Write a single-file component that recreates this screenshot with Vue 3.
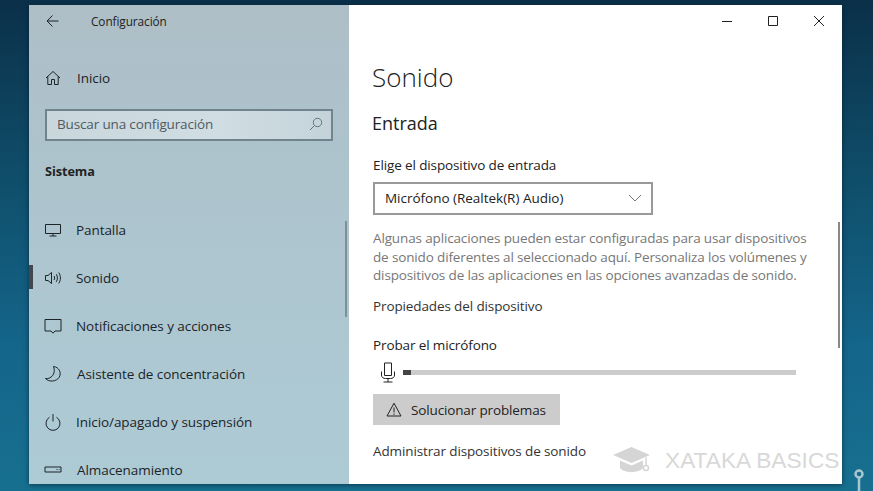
<script setup>
const navItems = [
  { label: 'Pantalla', icon: 'screen' },
  { label: 'Sonido', icon: 'sound', active: true },
  { label: 'Notificaciones y acciones', icon: 'note' },
  { label: 'Asistente de concentración', icon: 'moon', wide: true },
  { label: 'Inicio/apagado y suspensión', icon: 'power' },
  { label: 'Almacenamiento', icon: 'disk', wide: true }
]
</script>

<template>
  <div class="desktop">
    <div class="window">
      <aside class="sidebar">
        <div class="app-title">
          <svg class="back" width="16" height="14" viewBox="0 0 16 14">
            <path d="M13.5 7H2M7.5 1.5 2 7l5.5 5.500" />
          </svg>
          <span>Configuración</span>
        </div>

        <div class="home">
          <svg width="16" height="16" viewBox="0 0 16 16">
            <path d="M1 8 8 1.500 15 8M2.800 6.500V14.500H6.500V9.500H9.500V14.500H13.200V6.500" />
          </svg>
          <span>Inicio</span>
        </div>

        <div class="search">
          <span>Buscar una configuración</span>
          <svg width="14" height="14" viewBox="0 0 14 14">
            <circle cx="8.500" cy="5.500" r="4.200" />
            <path d="M5.500 8.500 1 13" />
          </svg>
        </div>

        <div class="group-name">Sistema</div>

        <nav class="nav">
          <div v-for="item in navItems" :key="item.label" class="nav-item" :class="{ wide: item.wide }">
            <i v-if="item.active" class="active-bar"></i>
            <svg class="nav-icon" width="18" height="18" viewBox="0 0 18 18">
              <template v-if="item.icon === 'screen'">
                <path d="M1.500 3.500H16.500V12.500H1.500ZM9 12.500V15M5.500 15H12.500" />
              </template>
              <template v-if="item.icon === 'sound'">
                <path d="M1.500 6.500H4L7.500 3.500V14.500L4 11.500H1.500Z" />
                <path d="M10 7C10.800 8.200 10.800 9.800 10 11M12.300 5.200C13.800 7.500 13.800 10.500 12.300 12.800M14.700 3.500C17 6.800 17 11.200 14.700 14.500" />
              </template>
              <template v-if="item.icon === 'note'">
                <path d="M1 2.500H17V14H11L9 16.200 7 14H1Z" />
              </template>
              <template v-if="item.icon === 'moon'">
                <path d="M9.500 1.500C15 2 18 8 15 12.500 12.500 16.500 5 17.500 1.500 13.500 6.500 14.500 12.500 9 9.500 1.500Z" />
              </template>
              <template v-if="item.icon === 'power'">
                <path d="M5.500 4.300A7 7 0 1 0 12.500 4.300M9 1V8.500" />
              </template>
              <template v-if="item.icon === 'disk'">
                <path d="M1 6H17V11H1Z" />
                <path d="M12.500 8.500H13.500M14.800 8.500H15.500" />
              </template>
            </svg>
            <span>{{ item.label }}</span>
          </div>
        </nav>
        <i class="side-scroll"></i>
      </aside>

      <main class="content">
        <div class="controls">
          <svg width="12" height="12" viewBox="0 0 12 12"><path d="M1 6.500H11" /></svg>
          <svg width="12" height="12" viewBox="0 0 12 12"><path d="M1.500 1.500H10.500V10.500H1.500Z" /></svg>
          <svg width="12" height="12" viewBox="0 0 12 12"><path d="M1 1 11 11M11 1 1 11" /></svg>
        </div>

        <h1>Sonido</h1>
        <h2>Entrada</h2>
        <p class="label">Elige el dispositivo de entrada</p>
        <div class="select">
          <span>Micrófono (Realtek(R) Audio)</span>
          <svg width="14" height="8" viewBox="0 0 14 8"><path d="M1 1 7 7 13 1" /></svg>
        </div>
        <p class="desc">Algunas aplicaciones pueden estar configuradas para usar dispositivos de sonido diferentes al seleccionado aquí. Personaliza los volúmenes y dispositivos de las aplicaciones en las opciones avanzadas de sonido.</p>
        <p class="link props">Propiedades del dispositivo</p>
        <p class="label test">Probar el micrófono</p>
        <div class="meter">
          <svg width="16" height="21" viewBox="0 0 16 21">
            <path d="M4.500 1H11.500V13.500H4.500ZM1.500 9.500V13C1.500 15.500 3.500 16.500 5.500 16.500H10.500C12.500 16.500 14.500 15.500 14.500 13V9.500M8 16.500V20M3.500 20H12.500" />
          </svg>
          <div class="bar"><div class="level" style="width: 2%"></div></div>
        </div>
        <button class="fix">
          <svg width="16" height="15" viewBox="0 0 16 15">
            <path d="M8 1.200 15 14H1ZM8 5.500V10.500M8 11.500V12.800" />
          </svg>
          <span>Solucionar problemas</span>
        </button>
        <p class="link manage">Administrar dispositivos de sonido</p>
        <i class="main-scroll"></i>
      </main>
    </div>

    <div class="watermark">
      <svg width="38" height="26" viewBox="0 0 38 26">
        <path class="fill" d="M18.500 0 37 8 18.500 16 0 8Z" />
        <path class="fill" d="M7 13.500 18.500 18.500 30 13.500V21C26 26.500 11 26.500 7 21Z" />
        <path class="line" d="M33 10.500V18" />
        <circle class="line" cx="33" cy="21" r="2.500" />
      </svg>
      <span>XATAKA BASICS</span>
    </div>

    <svg class="pin" width="14" height="23" viewBox="0 0 14 23">
      <circle cx="7" cy="6" r="3.500" />
      <path d="M7 10V23" />
    </svg>
  </div>
</template>

<style scoped>
.desktop {
  position: relative;
  width: 873px;
  height: 491px;
  overflow: hidden;
  padding: 5px 31px 7px 29px;
  box-sizing: border-box;
  background: linear-gradient(180deg, #0b3049 0%, #0f4d69 35%, #14658a 70%, #17708f 100%);
  font-family: "Open Sans", "Noto Sans", sans-serif;
  color: #222;
}
.window {
  display: flex;
  height: 479px;
  box-shadow: 0 1px 5px rgba(0, 20, 40, 0.6);
  overflow: hidden;
}
svg {
  fill: none;
  stroke: currentColor;
  stroke-width: 1;
  flex: none;
}

.sidebar {
  position: relative;
  width: 320px;
  flex: none;
  background: linear-gradient(180deg, #aebec7 0%, #adc3cc 30%, #adcbd5 100%);
  font-size: 13.500px;
  letter-spacing: -0.07px;
}
.app-title {
  display: flex;
  align-items: center;
  box-sizing: border-box;
  height: 33px;
  padding: 0 0 1px 16px;
  font-size: 11.800px;
}
.back {
  margin-right: 30px;
  color: #1c2428;
}
.home {
  display: flex;
  align-items: center;
  gap: 16px;
  height: 30px;
  margin-top: 25px;
  padding-left: 16px;
  color: #1c2428;
}
.search {
  display: flex;
  align-items: center;
  justify-content: space-between;
  box-sizing: border-box;
  width: 288px;
  height: 32px;
  margin: 16px 0 0 16px;
  padding: 0 8px 2px 10px;
  border: 2px solid #6f848d;
  background: linear-gradient(90deg, #c9d6dc, #d0dde3 60%, #c4d3da);
  color: #4f5c62;
  letter-spacing: -0.15px;
}
.search svg {
  color: #66757c;
}
.group-name {
  margin: 20px 0 0 16px;
  height: 20px;
  line-height: 20px;
  font-size: 12.700px;
  font-weight: 700;
}
.nav {
  margin-top: 25px;
}
.nav-item {
  position: relative;
  display: flex;
  align-items: center;
  gap: 14px;
  height: 48px;
  padding-left: 15px;
  color: #1c2428;
}
.nav-item.wide {
  gap: 15px;
}
.active-bar {
  position: absolute;
  left: 0;
  top: 11px;
  width: 4px;
  height: 24px;
  background: #42484b;
}
.side-scroll {
  position: absolute;
  left: 316px;
  top: 216px;
  width: 2px;
  height: 96px;
  background: #7f8f97;
}

.content {
  position: relative;
  flex: 1;
  padding-left: 24px;
  background: #fff;
  font-size: 13.500px;
  letter-spacing: -0.12px;
}
.controls {
  display: flex;
  justify-content: flex-end;
  gap: 34px;
  height: 32px;
  padding: 10px 17px 0 0;
  box-sizing: border-box;
  color: #222;
}
h1 {
  margin: 21px 0 0 -1px;
  height: 38px;
  line-height: 38px;
  font-size: 26px;
  font-weight: 300;
  letter-spacing: 0;
  color: #222;
}
h2 {
  margin: 13.500px 0 0 -1px;
  height: 26px;
  line-height: 26px;
  font-size: 18px;
  font-weight: 400;
  letter-spacing: 0;
  color: #222;
}
p {
  margin: 0;
}
.label {
  margin-top: 19.500px;
  line-height: 20px;
}
.select {
  display: flex;
  align-items: center;
  justify-content: space-between;
  box-sizing: border-box;
  width: 280px;
  height: 33px;
  margin-top: 7px;
  padding: 0 9px 1px 10px;
  border: 2px solid #999;
  letter-spacing: -0.02px;
}
.select svg {
  color: #777;
}
.desc {
  width: 450px;
  margin-top: 14px;
  line-height: 18.500px;
  color: #777;
  letter-spacing: -0.14px;
}
.link {
  line-height: 20px;
  color: #333;
}
.props {
  margin-top: 11px;
}
.label.test {
  margin-top: 19px;
}
.meter {
  display: flex;
  align-items: center;
  gap: 7px;
  height: 21px;
  margin-top: 7px;
  padding-left: 7px;
}
.bar {
  width: 393px;
  height: 5px;
  background: #ccc;
}
.level {
  height: 100%;
  background: #444;
}
.fix {
  display: flex;
  align-items: center;
  gap: 9px;
  width: 187px;
  height: 31px;
  margin-top: 11px;
  padding: 0 0 0 13px;
  border: 0;
  background: #ccc;
  color: #222;
  font: inherit;
  letter-spacing: -0.14px;
}
.fix span {
  padding-top: 1px;
}
.manage {
  margin-top: 16px;
}
.main-scroll {
  position: absolute;
  right: 2px;
  top: 217px;
  width: 2px;
  height: 126px;
  background: #888;
}

.watermark {
  position: absolute;
  left: 613px;
  top: 447px;
  display: flex;
  align-items: center;
  gap: 14px;
  height: 26px;
  color: #d8d8d8;
  font-family: "Liberation Sans", sans-serif;
  font-size: 22.700px;
  white-space: nowrap;
}
.watermark .fill {
  fill: #d5d5d5;
  stroke: none;
}
.watermark .line {
  stroke: #d5d5d5;
  stroke-width: 1.500;
}
.pin {
  position: absolute;
  left: 852px;
  top: 468px;
  color: #a9c6d0;
}
.pin * {
  stroke-width: 2.500;
}
</style>
